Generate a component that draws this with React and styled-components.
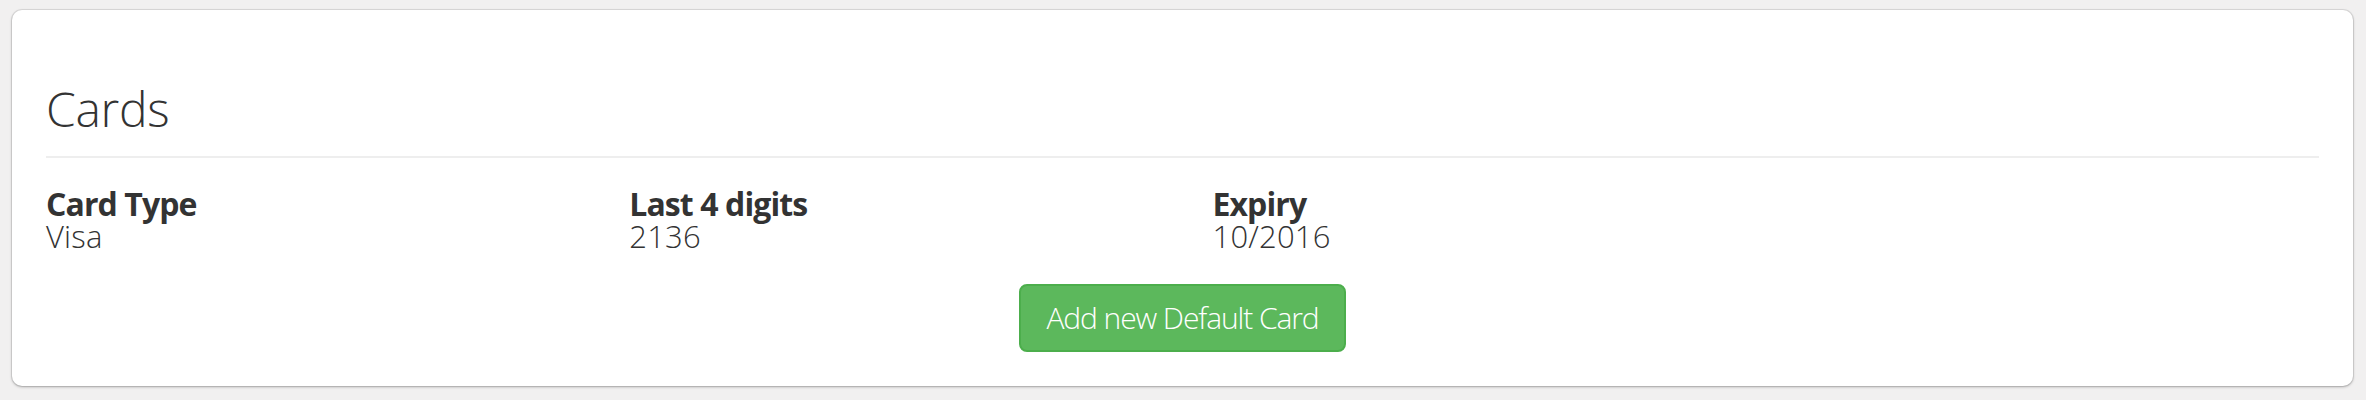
import React from "react";
import styled, { createGlobalStyle } from "styled-components";

const GlobalStyle = createGlobalStyle`
  html, body {
    margin: 0;
    padding: 0;
    background: #f1f0f0;
  }
  body {
    font-family: "Open Sans", "Liberation Sans", sans-serif;
    color: #333333;
  }
  * { box-sizing: border-box; }
`;

const Page = styled.div`
  padding: 10px 13px 14px 12px;
`;

const Panel = styled.section`
  background: #ffffff;
  border-radius: 10px;
  box-shadow: 0 0 0 1px rgba(0, 0, 0, 0.08), 0 1px 3px rgba(0, 0, 0, 0.28);
  padding: 73px 34px 34px 34px;
`;

const Title = styled.h3`
  margin: 0 0 20px 0;
  font-size: 48px;
  line-height: 52.8px;
  font-weight: 300;
  color: #333333;
  letter-spacing: -0.3px;
`;

const Rule = styled.hr`
  margin: 0 0 30px 0;
  border: 0;
  border-top: 2px solid #eeeeee;
`;

const Row = styled.div`
  display: grid;
  grid-template-columns: repeat(4, 1fr);
  margin: 0 -30px;
`;

const Col = styled.div`
  padding: 0 30px;
`;

const Label = styled.div`
  font-size: 32px;
  line-height: 32px;
  font-weight: 700;
  letter-spacing: -0.9px;
`;

const Value = styled.div`
  font-size: 31px;
  line-height: 32px;
  font-weight: 300;
  letter-spacing: 0.2px;
`;

const Actions = styled.div`
  display: flex;
  justify-content: center;
  margin-top: 32px;
`;

const Button = styled.button`
  font-family: "Open Sans", "Liberation Sans", sans-serif;
  font-size: 30px;
  line-height: 40px;
  font-weight: 300;
  letter-spacing: -1.1px;
  color: #ffffff;
  background: #5cb85c;
  border: 2px solid #4cae4c;
  border-radius: 8px;
  padding: 12px 25px;
  cursor: pointer;
`;

const fields = [
  { label: "Card Type", value: "Visa" },
  { label: "Last 4 digits", value: "2136" },
  { label: "Expiry", value: "10/2016" },
];

export default function App() {
  return (
    <>
      <GlobalStyle />
      <Page>
        <Panel>
          <Title>Cards</Title>
          <Rule />
          <Row>
            {fields.map((f) => (
              <Col key={f.label}>
                <Label>{f.label}</Label>
                <Value>{f.value}</Value>
              </Col>
            ))}
          </Row>
          <Actions>
            <Button type="button">Add new Default Card</Button>
          </Actions>
        </Panel>
      </Page>
    </>
  );
}
